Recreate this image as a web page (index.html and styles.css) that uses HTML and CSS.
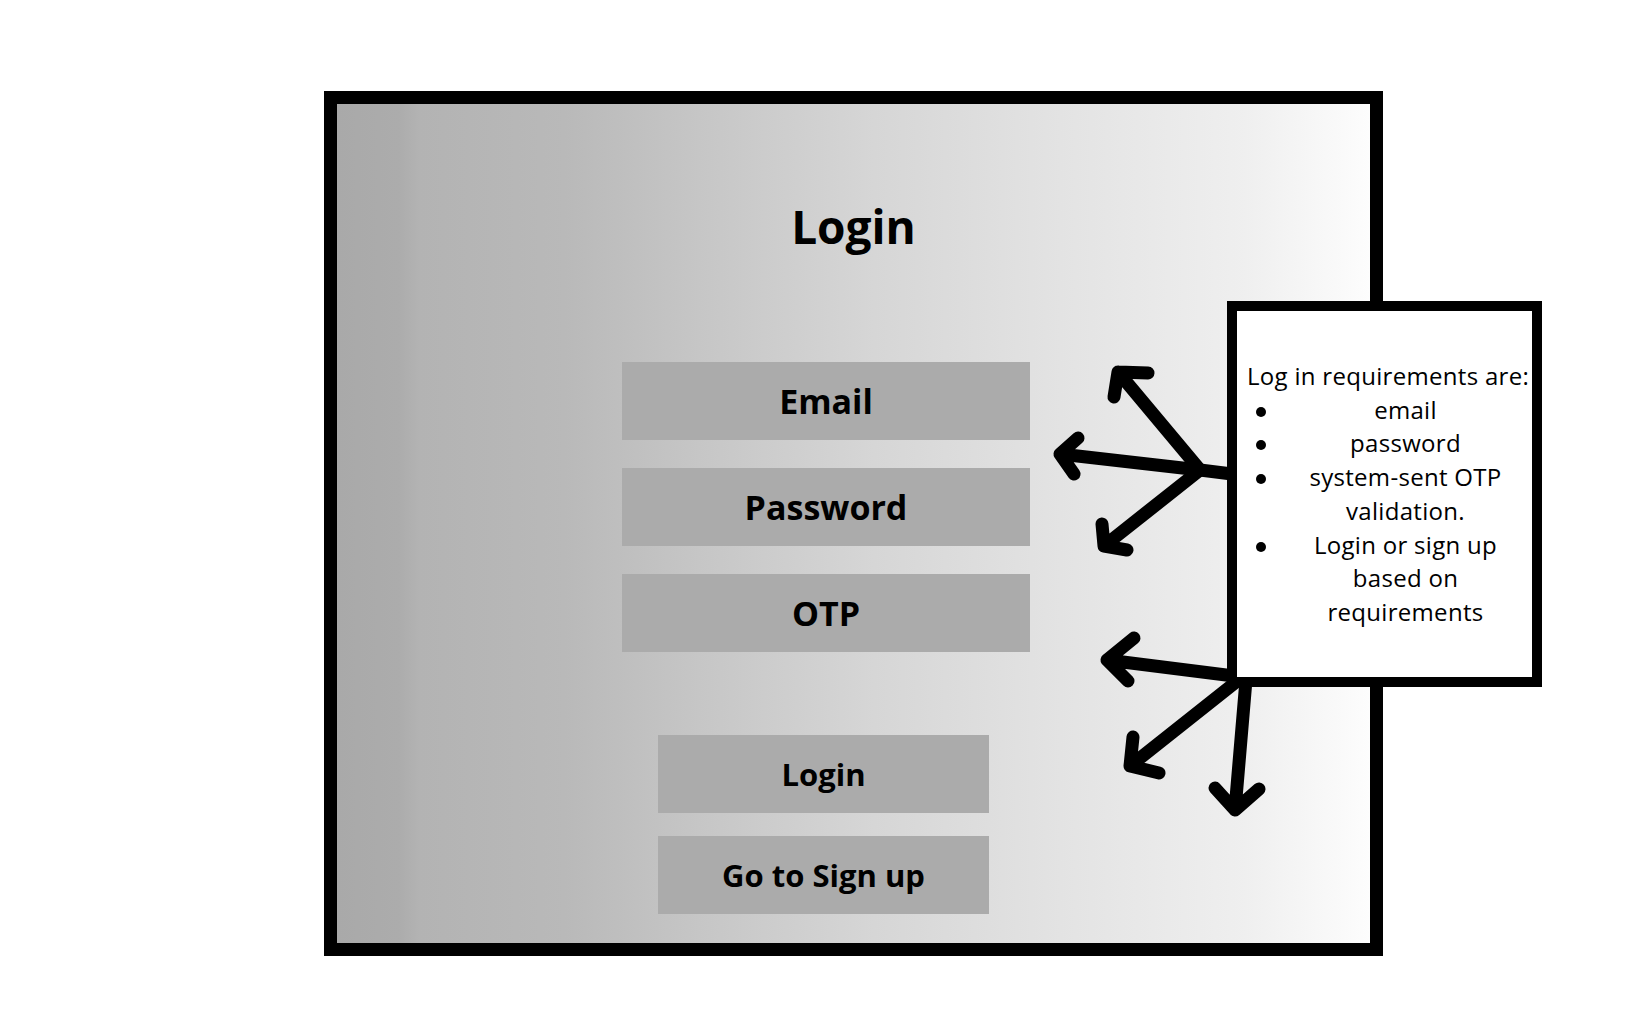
FILE: index.html
```html
<!DOCTYPE html>
<html lang="en">
<head>
    <meta charset="UTF-8">
    <meta name="viewport" content="width=device-width, initial-scale=1.0">
    <title>Login</title>
    <link rel="stylesheet" href="styles.css">
</head>
<body>
    <div class="canvas">
        <!-- 로그인 화면 -->
        <div class="screen">
            <h1 class="title">Login</h1>

            <div class="fields">
                <div class="field">Email</div>
                <div class="field">Password</div>
                <div class="field">OTP</div>
            </div>

            <div class="actions">
                <div class="action">Login</div>
                <div class="action">Go to Sign up</div>
            </div>
        </div>

        <!-- 화살표 -->
        <svg class="arrows" viewBox="0 0 1646 1030">
            <g fill="none" stroke="#000" stroke-width="13" stroke-linecap="round" stroke-linejoin="round">
                <path d="M1232 474 L1200 470"/>
                <path d="M1200 470 L1118 372 M1148 373 L1118 372 L1114 397"/>
                <path d="M1200 470 L1060 454 M1078 438 L1060 454 L1074 474"/>
                <path d="M1200 470 L1104 546 M1102 524 L1104 546 L1127 550"/>

                <path d="M1234 676 L1107 660 M1134 638 L1107 660 L1128 681"/>
                <path d="M1236 682 L1130 766 M1133 737 L1130 766 L1159 773"/>
                <path d="M1246 680 L1235 810 M1215 788 L1235 810 L1259 789"/>
            </g>
        </svg>

        <!-- 요구사항 메모 -->
        <div class="note">
            <p class="note-title">Log in requirements are:</p>
            <ul class="note-list">
                <li>email</li>
                <li>password</li>
                <li>system-sent OTP validation.</li>
                <li>Login or sign up based on requirements</li>
            </ul>
        </div>
    </div>
</body>
</html>
```

FILE: styles.css
```css
body {
    margin: 0;
    background-color: #ffffff;
    font-family: "Open Sans", "Noto Sans", sans-serif;
    color: #000;
}

.canvas {
    position: relative;
    width: 1646px;
    height: 1030px;
    box-sizing: border-box;
    padding: 91px 0 0 324px;
}

.screen {
    width: 1059px;
    height: 865px;
    box-sizing: border-box;
    border: 13px solid #000;
    padding-top: 99px;
    background: linear-gradient(to right, #a9a9a9 0%, #acacac 6%, #b3b3b3 8%, #b9b9b9 22%, #c6c6c6 35%, #d6d6d6 52%, #e3e3e3 70%, #efefef 88%, #fdfdfd 100%);
}

.title {
    margin: 0;
    font-size: 46px;
    line-height: 46px;
    font-weight: 700;
    text-align: center;
}

.fields {
    display: flex;
    flex-direction: column;
    gap: 28px;
    width: 408px;
    margin: 113px 0 0 285px;
}

.field,
.action {
    display: flex;
    justify-content: center;
    align-items: center;
    height: 78px;
    background-color: #ababab;
    font-weight: 700;
}

.field {
    font-size: 34px;
}

.actions {
    display: flex;
    flex-direction: column;
    gap: 23px;
    width: 331px;
    margin: 83px 0 0 321px;
}

.action {
    font-size: 31px;
}

.arrows {
    position: absolute;
    top: 0;
    left: 0;
    width: 1646px;
    height: 1030px;
}

.note {
    position: absolute;
    top: 301px;
    left: 1227px;
    width: 315px;
    height: 386px;
    box-sizing: border-box;
    border: 10px solid #000;
    padding: 48px 8px 0 10px;
    background-color: #fff;
    font-size: 24px;
    letter-spacing: 0.3px;
    line-height: 33.7px;
}

.note-title {
    margin: 0;
    text-align: center;
    white-space: nowrap;
}

.note-list {
    margin: 0;
    padding: 0;
    list-style: none;
}

.note-list li {
    display: grid;
    grid-template-columns: 40px 1fr;
    text-align: center;
}

.note-list li::before {
    content: "";
    width: 10px;
    height: 10px;
    margin: 14px 0 0 9px;
    border-radius: 50%;
    background-color: #000;
}
```
